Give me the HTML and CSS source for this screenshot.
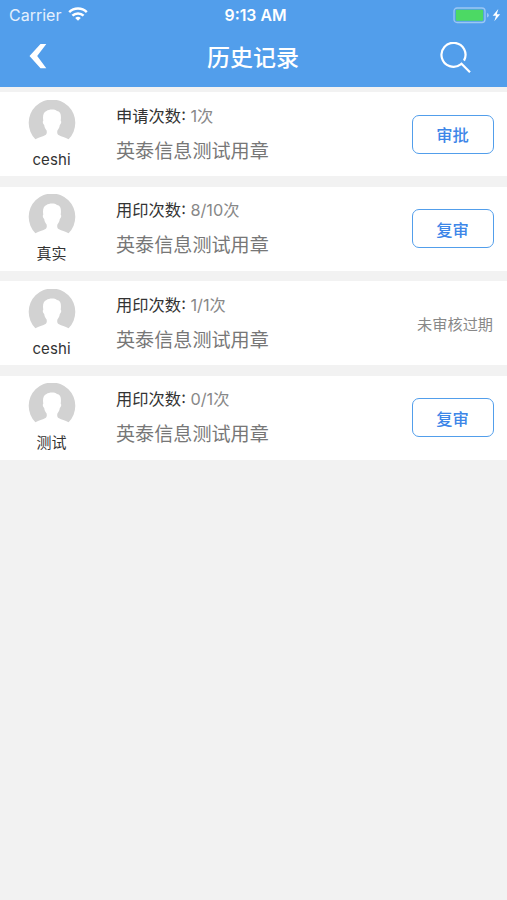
FILE: index.html
```html
<!DOCTYPE html>
<html lang="zh-CN">
<head>
  <meta charset="UTF-8">
  <title>历史记录</title>
  <link rel="stylesheet" href="styles.css">
</head>
<body>
  <svg width="0" height="0" class="defs">
    <symbol id="avatar" viewBox="0 0 48 40">
      <path d="M7.400 39.200A23.300 23.300 0 1 1 40.600 39.200C37 37.200 33.500 37 31 35.300C29 34 29 32.500 29.400 30.500C31 28.500 31.500 27 31.800 25C33.300 24 33.600 21.500 32.700 20.500C33.600 14 32 11.500 29 11C26.500 8.800 21 9.200 18.500 11C15 12.500 14.600 16.500 15.300 20.500C14.400 21.500 14.700 24 16.200 25C16.500 27 17 28.500 18.600 30.500C19 32.500 19 34 17 35.300C14.500 37 11 37.200 7.400 39.200Z" fill="#d2d2d2"/>
    </symbol>
  </svg>

  <header class="header">
    <div class="status-bar">
      <div class="carrier">
        <span>Carrier</span>
        <svg width="20" height="14" viewBox="0 0 20 14" fill="none" stroke="#fff" stroke-width="2.5">
          <path d="M1.200 5.200A12.500 12.500 0 0 1 18.800 5.200M4.400 8.700A8 8 0 0 1 15.600 8.700"/>
          <path d="M10 13.700L7.200 11A4.200 4.200 0 0 1 12.800 11Z" fill="#fff" stroke="none"/>
        </svg>
      </div>
      <div class="time">9:13 AM</div>
      <div class="battery">
        <svg width="49" height="17" viewBox="0 0 49 17">
          <rect x="1" y="1" width="31" height="14.500" rx="3" fill="none" stroke="#9bc7f4" stroke-width="1.300"/>
          <rect x="2.800" y="2.800" width="27.400" height="10.900" rx="1" fill="#4cd964"/>
          <path d="M34 6V10.500Q35.800 10 35.800 8.250Q35.800 6.500 34 6Z" fill="#9bc7f4"/>
          <path d="M45.300 2L39.700 8.700H43L41.300 14.300L47.200 7.200H43.800Z" fill="#fff"/>
        </svg>
      </div>
    </div>
    <div class="nav">
      <svg class="back" width="18" height="25" viewBox="0 0 18 25">
        <path d="M11.500 0H17.300L8.200 12L17.300 24.300H11.500L0.500 12Z" fill="#fff"/>
      </svg>
      <h1>历史记录</h1>
      <svg class="search" width="32" height="32" viewBox="0 0 32 32" fill="none" stroke="#fff" stroke-width="2.200">
        <path d="M24 18.600A12 12 0 1 0 20.700 22.400L21.500 21.700L30 30.200"/>
      </svg>
    </div>
  </header>

  <main class="list">
    <div class="item">
      <div class="user">
        <svg class="avatar"><use href="#avatar"/></svg>
        <div class="name latin">ceshi</div>
      </div>
      <div class="info">
        <div class="count">申请次数: <span>1次</span></div>
        <div class="seal">英泰信息测试用章</div>
      </div>
      <button class="btn">审批</button>
    </div>
    <div class="item">
      <div class="user">
        <svg class="avatar"><use href="#avatar"/></svg>
        <div class="name">真实</div>
      </div>
      <div class="info">
        <div class="count">用印次数: <span>8/10次</span></div>
        <div class="seal">英泰信息测试用章</div>
      </div>
      <button class="btn">复审</button>
    </div>
    <div class="item">
      <div class="user">
        <svg class="avatar"><use href="#avatar"/></svg>
        <div class="name latin">ceshi</div>
      </div>
      <div class="info">
        <div class="count">用印次数: <span>1/1次</span></div>
        <div class="seal">英泰信息测试用章</div>
      </div>
      <div class="expired">未审核过期</div>
    </div>
    <div class="item">
      <div class="user">
        <svg class="avatar"><use href="#avatar"/></svg>
        <div class="name">测试</div>
      </div>
      <div class="info">
        <div class="count">用印次数: <span>0/1次</span></div>
        <div class="seal">英泰信息测试用章</div>
      </div>
      <button class="btn">复审</button>
    </div>
  </main>
</body>
</html>
```
FILE: styles.css
```css
* {
  box-sizing: border-box;
}
body {
  margin: 0;
  min-height: 100vh;
  background-color: #f2f2f2;
  font-family: Inter, "Noto Sans CJK SC", sans-serif;
}
.defs {
  display: block;
}
.header {
  height: 87px;
  background-color: #529eeb;
  color: white;
}
.status-bar {
  display: grid;
  grid-template-columns: 1fr auto 1fr;
  align-items: center;
  height: 30px;
  padding: 0 5px 0 9px;
}
.carrier {
  display: flex;
  align-items: center;
  gap: 7px;
  font-size: 16px;
  color: #e4f0fd;
}
.carrier svg {
  margin-top: -2px;
}
.time {
  font-size: 15.8px;
  font-weight: 600;
}
.battery {
  display: flex;
  justify-content: flex-end;
}
.nav {
  display: grid;
  grid-template-columns: 1fr auto 1fr;
  align-items: center;
  height: 55px;
  padding: 0 35px 0 34px;
}
.nav h1 {
  margin: 0;
  font-size: 23px;
  font-weight: 500;
  line-height: 30px;
}
.back {
  margin: -3px 0 0 -5px;
}
.search {
  justify-self: end;
}
.list {
  display: flex;
  flex-direction: column;
  gap: 10.5px;
  padding-top: 5px;
}
.item {
  display: flex;
  align-items: center;
  height: 84px;
  padding-right: 13px;
  background-color: white;
}
.user {
  width: 103px;
  text-align: center;
}
.avatar {
  display: block;
  width: 48px;
  height: 40px;
  margin: 0 auto;
}
.name {
  height: 20px;
  margin-top: 9px;
  font-size: 15px;
  line-height: 22px;
  color: #333;
}
.latin {
  letter-spacing: 0.1px;
}
.info {
  flex: 1;
  padding-left: 13px;
}
.count {
  font-size: 16.3px;
  line-height: 24px;
  color: #333;
}
.count span {
  color: #888;
}
.seal {
  margin-top: 9px;
  font-size: 19.1px;
  line-height: 28px;
  color: #777;
}
.btn {
  width: 82px;
  height: 39px;
  padding: 0 1px 0 0;
  border: 1.5px solid #529eeb;
  border-radius: 7px;
  background-color: white;
  color: #3d86e8;
  font-family: inherit;
  font-size: 16.3px;
  font-weight: 500;
}
.expired {
  margin-right: 1px;
  font-size: 15.2px;
  color: #888;
}
```
